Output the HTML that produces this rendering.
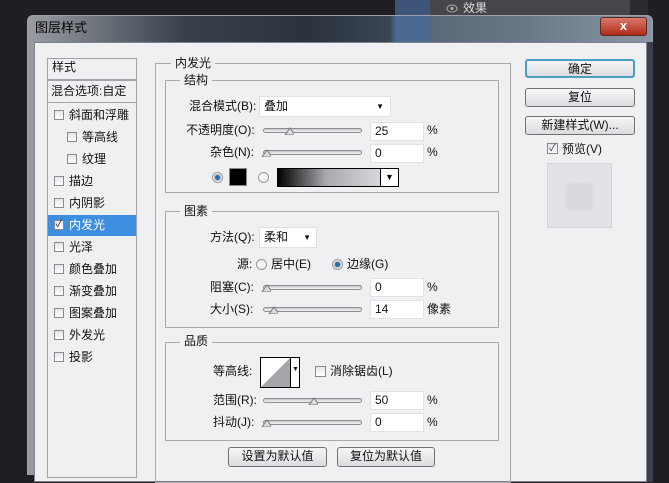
<!DOCTYPE html>
<html><head><meta charset="utf-8"><style>
*{margin:0;padding:0;box-sizing:border-box}
body{width:669px;height:472px;overflow:hidden;background:#201e22;position:relative;font-family:"Liberation Sans","Noto Sans CJK SC",sans-serif;font-size:12px;color:#111}
.a{position:absolute}
.t{position:absolute;white-space:nowrap;line-height:14px}
.grp{position:absolute;border:1px solid #a9a8ad}
.lbl{position:absolute;background:#f0eff2;padding:0 4px;line-height:14px}
.inp{position:absolute;background:#fff;border:1px solid #e2e2e6;height:19px;padding-left:4px;line-height:17px}
.sl{position:absolute;height:5px;border:1px solid #8d8c92;border-radius:3px;background:linear-gradient(#c8c8cc,#f4f4f6);width:99px}
.th{position:absolute;width:10px;height:8px;top:0}
.btn{position:absolute;border:1px solid #707075;border-radius:3px;background:linear-gradient(#f6f6f8,#dcdce0);text-align:center;line-height:17px;height:19px}
.cb{position:absolute;width:10px;height:10px;border:1px solid #8a8a8e;background:linear-gradient(#e6e6ea,#fff)}
.row{position:absolute;left:48px;width:88px;height:22px;line-height:22px;white-space:nowrap}
.rd{position:absolute;width:11px;height:11px;border-radius:50%;border:1px solid #999;background:#f4f4f4}
</style></head><body>
<!-- background panel -->
<div class="a" style="left:395px;top:0;width:40px;height:20px;background:#3e5478"></div>
<div class="a" style="left:430px;top:0;width:200px;height:16px;background:#464549"></div>
<div class="a" style="left:630px;top:0;width:18px;height:16px;background:#2c2b30"></div>
<svg class="a" style="left:446px;top:4px" width="12" height="9"><ellipse cx="6" cy="4.5" rx="5" ry="3.5" fill="none" stroke="#aaa"/><circle cx="6" cy="4.5" r="1.6" fill="#aaa"/></svg>
<div class="t" style="left:463px;top:1px;color:#ddd">效果</div>
<!-- dialog frame -->
<div class="a" style="left:27px;top:15px;width:626px;height:460px;border-radius:6px 6px 0 0;background:linear-gradient(90deg,#9a9ca2 0%,#6a7078 12%,#38404a 25%,#2a323c 45%,#3a4656 58%,#4a6a92 59%,#4a6a92 64%,#5a6878 65%,#6a7888 80%,#8a96a4 100%);border:1px solid #9ca2ac"></div>
<div class="t" style="left:35px;top:21px;color:#000;font-size:13px">图层样式</div>
<div class="a" style="left:600px;top:17px;width:47px;height:19px;border-radius:3px;background:linear-gradient(#d87a6a,#b02a18);border:1px solid #5a2a24;color:#fff;text-align:center;font-weight:bold;line-height:16px;font-size:13px">x</div>
<div class="a" style="left:34px;top:42px;width:613px;height:440px;background:#f0eff2;border:1px solid #7d8390"></div>
<div class="a" style="left:647px;top:42px;width:6px;height:440px;background:#3a3f4c"></div>
<!-- left list -->
<div class="a" style="left:47px;top:58px;width:90px;height:420px;border:1px solid #a3a2a8;background:#f0eff2"></div>
<div class="t" style="left:52px;top:60px">样式</div>
<div class="a" style="left:47px;top:79px;width:90px;height:2px;border-top:1px solid #a3a2a8;border-bottom:1px solid #a3a2a8"></div>
<div class="t" style="left:51px;top:84px">混合选项:自定</div>
<div class="a" style="left:47px;top:102px;width:90px;height:1px;background:#a3a2a8"></div>
<div class="a" style="left:48px;top:215px;width:88px;height:21px;background:#3d8ee0"></div>
<div class="row" style="top:104px"><span class="cb" style="left:6px;top:6px"></span><span style="position:absolute;left:21px">斜面和浮雕</span></div>
<div class="row" style="top:126px"><span class="cb" style="left:19px;top:6px"></span><span style="position:absolute;left:34px">等高线</span></div>
<div class="row" style="top:148px"><span class="cb" style="left:19px;top:6px"></span><span style="position:absolute;left:34px">纹理</span></div>
<div class="row" style="top:170px"><span class="cb" style="left:6px;top:6px"></span><span style="position:absolute;left:21px">描边</span></div>
<div class="row" style="top:192px"><span class="cb" style="left:6px;top:6px"></span><span style="position:absolute;left:21px">内阴影</span></div>
<div class="row" style="top:214px;color:#fff"><span class="cb" style="left:6px;top:6px;color:#223;font-size:10px;line-height:8px;text-align:center">✓</span><span style="position:absolute;left:21px">内发光</span></div>
<div class="row" style="top:236px"><span class="cb" style="left:6px;top:6px"></span><span style="position:absolute;left:21px">光泽</span></div>
<div class="row" style="top:258px"><span class="cb" style="left:6px;top:6px"></span><span style="position:absolute;left:21px">颜色叠加</span></div>
<div class="row" style="top:280px"><span class="cb" style="left:6px;top:6px"></span><span style="position:absolute;left:21px">渐变叠加</span></div>
<div class="row" style="top:302px"><span class="cb" style="left:6px;top:6px"></span><span style="position:absolute;left:21px">图案叠加</span></div>
<div class="row" style="top:324px"><span class="cb" style="left:6px;top:6px"></span><span style="position:absolute;left:21px">外发光</span></div>
<div class="row" style="top:346px"><span class="cb" style="left:6px;top:6px"></span><span style="position:absolute;left:21px">投影</span></div>
<!-- main group -->
<div class="grp" style="left:155px;top:63px;width:356px;height:420px"></div>
<div class="lbl" style="left:171px;top:56px">内发光</div>
<div class="grp" style="left:165px;top:80px;width:334px;height:113px"></div>
<div class="lbl" style="left:180px;top:73px">结构</div>
<div class="t" style="left:189px;top:99px">混合模式(B):</div>
<div class="inp" style="left:259px;top:96px;width:132px;height:21px;line-height:19px">叠加<span style="position:absolute;right:6px;font-size:8px">▼</span></div>
<div class="t" style="left:186px;top:123px">不透明度(O):</div>
<div class="sl" style="left:263px;top:128px"><svg class="th" style="left:20px;top:-2px" width="12" height="9"><path d="M1 8 L6 1 L11 8 Z" fill="#ddd" stroke="#777"/></svg></div>
<div class="inp" style="left:370px;top:122px;width:54px">25</div><div class="t" style="left:427px;top:123px">%</div>
<div class="t" style="left:210px;top:145px">杂色(N):</div>
<div class="sl" style="left:263px;top:150px"><svg class="th" style="left:-3px;top:-2px" width="12" height="9"><path d="M1 8 L6 1 L11 8 Z" fill="#ddd" stroke="#777"/></svg></div>
<div class="inp" style="left:370px;top:144px;width:54px">0</div><div class="t" style="left:427px;top:145px">%</div>
<div class="rd" style="left:212px;top:172px;background:radial-gradient(#2a6a9a 30%,#9ac 45%,#eee 60%)"></div>
<div class="a" style="left:229px;top:168px;width:18px;height:18px;background:#000;border:1px solid #888"></div>
<div class="rd" style="left:258px;top:172px"></div>
<div class="a" style="left:277px;top:168px;width:122px;height:19px;border:1px solid #000;background:linear-gradient(90deg,#000,rgba(120,120,130,.6) 40%,#e8e8ea 100%)"></div>
<div class="a" style="left:380px;top:168px;width:19px;height:19px;border:1px solid #000;background:#fff;text-align:center;font-size:9px;line-height:17px">▼</div>
<div class="grp" style="left:165px;top:211px;width:334px;height:117px"></div>
<div class="lbl" style="left:180px;top:204px">图素</div>
<div class="t" style="left:210px;top:230px">方法(Q):</div>
<div class="inp" style="left:259px;top:227px;width:58px;height:21px;line-height:19px">柔和<span style="position:absolute;right:5px;font-size:8px">▼</span></div>
<div class="t" style="left:237px;top:257px">源:</div>
<div class="rd" style="left:256px;top:259px"></div>
<div class="t" style="left:271px;top:257px">居中(E)</div>
<div class="rd" style="left:332px;top:259px;background:radial-gradient(#2a6a9a 30%,#9ac 45%,#eee 60%)"></div>
<div class="t" style="left:347px;top:257px">边缘(G)</div>
<div class="t" style="left:210px;top:280px">阻塞(C):</div>
<div class="sl" style="left:263px;top:285px"><svg class="th" style="left:-3px;top:-2px" width="12" height="9"><path d="M1 8 L6 1 L11 8 Z" fill="#ddd" stroke="#777"/></svg></div>
<div class="inp" style="left:370px;top:278px;width:54px">0</div><div class="t" style="left:427px;top:280px">%</div>
<div class="t" style="left:210px;top:302px">大小(S):</div>
<div class="sl" style="left:263px;top:307px"><svg class="th" style="left:4px;top:-2px" width="12" height="9"><path d="M1 8 L6 1 L11 8 Z" fill="#ddd" stroke="#777"/></svg></div>
<div class="inp" style="left:370px;top:300px;width:54px">14</div><div class="t" style="left:427px;top:302px">像素</div>
<div class="grp" style="left:165px;top:342px;width:334px;height:99px"></div>
<div class="lbl" style="left:180px;top:334px">品质</div>
<div class="t" style="left:213px;top:364px">等高线:</div>
<div class="a" style="left:260px;top:357px;width:40px;height:31px;border:1px solid #000;background:#fff"><svg width="30" height="29" style="position:absolute;left:0;top:0"><path d="M0 29 L29 0 L29 29 Z" fill="#a6a5aa"/></svg><div style="position:absolute;left:29px;top:0;width:1px;height:29px;background:#000"></div><div style="position:absolute;left:31px;top:8px;font-size:7px">▼</div></div>
<div class="cb" style="left:315px;top:366px;width:11px;height:11px"></div>
<div class="t" style="left:330px;top:364px">消除锯齿(L)</div>
<div class="t" style="left:213px;top:393px">范围(R):</div>
<div class="sl" style="left:263px;top:398px"><svg class="th" style="left:44px;top:-2px" width="12" height="9"><path d="M1 8 L6 1 L11 8 Z" fill="#ddd" stroke="#777"/></svg></div>
<div class="inp" style="left:370px;top:391px;width:54px">50</div><div class="t" style="left:427px;top:393px">%</div>
<div class="t" style="left:213px;top:415px">抖动(J):</div>
<div class="sl" style="left:263px;top:420px"><svg class="th" style="left:-3px;top:-2px" width="12" height="9"><path d="M1 8 L6 1 L11 8 Z" fill="#ddd" stroke="#777"/></svg></div>
<div class="inp" style="left:370px;top:413px;width:54px">0</div><div class="t" style="left:427px;top:415px">%</div>
<div class="btn" style="left:228px;top:447px;width:99px;height:20px">设置为默认值</div>
<div class="btn" style="left:337px;top:447px;width:98px;height:20px">复位为默认值</div>
<!-- right -->
<div class="btn" style="left:525px;top:59px;width:110px;border:2px solid #4a9ec0">确定</div>
<div class="btn" style="left:525px;top:88px;width:110px">复位</div>
<div class="btn" style="left:525px;top:116px;width:110px">新建样式(W)...</div>
<div class="cb" style="left:547px;top:143px;width:11px;height:11px;font-size:10px;line-height:9px;text-align:center;color:#234">✓</div>
<div class="t" style="left:562px;top:142px">预览(V)</div>
<div class="a" style="left:547px;top:163px;width:65px;height:65px;border:1px solid #d5d4d8;background:#e2e1e5"></div>
<div class="a" style="left:564px;top:181px;width:31px;height:31px;background:#dad9dd;box-shadow:inset 0 0 4px #eee"></div>
</body></html>
